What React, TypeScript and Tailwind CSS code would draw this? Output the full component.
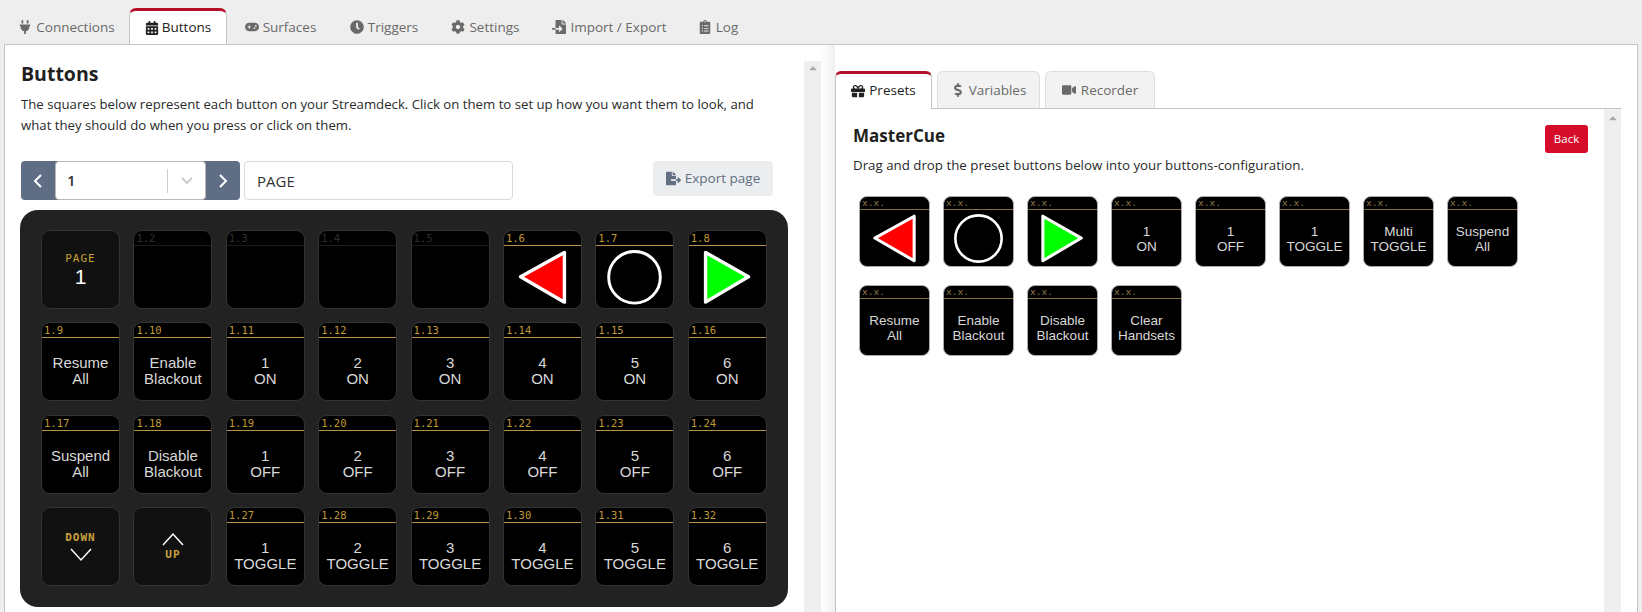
import { ReactNode } from "react";
import {
  FaPlug,
  FaCalendarAlt,
  FaClock,
  FaCog,
  FaFileImport,
  FaClipboardList,
  FaGift,
  FaDollarSign,
  FaVideo,
  FaFileExport,
  FaCaretUp,
} from "react-icons/fa";
import { FaGamepad } from "react-icons/fa6";

const mainTabs = [
  { label: "Connections", icon: <FaPlug />, width: "w-[125px]" },
  { label: "Buttons", icon: <FaCalendarAlt />, width: "w-[98px]", active: true },
  { label: "Surfaces", icon: <FaGamepad />, width: "w-[107px]" },
  { label: "Triggers", icon: <FaClock />, width: "w-[100px]" },
  { label: "Settings", icon: <FaCog />, width: "w-[103px]" },
  { label: "Import / Export", icon: <FaFileImport />, width: "w-[145px]" },
  { label: "Log", icon: <FaClipboardList />, width: "w-[72px]" },
];

const pixelFont = "font-['DejaVu_Sans_Mono',monospace]";

function Triangle({ dir }: { dir: "left" | "right" }) {
  const points = dir === "left" ? "17,47 62,22 62,73" : "17,22 17,73 61,47";
  return (
    <svg viewBox="0 0 79 79" className="absolute inset-0 h-full w-full">
      <polygon
        points={points}
        fill={dir === "left" ? "#ff0000" : "#00ff00"}
        stroke="#ffffff"
        strokeWidth="3.5"
        strokeLinejoin="round"
      />
    </svg>
  );
}

function Circle() {
  return (
    <svg viewBox="0 0 79 79" className="absolute inset-0 h-full w-full">
      <circle cx="39.5" cy="47.5" r="26.5" fill="none" stroke="#ffffff" strokeWidth="3" />
    </svg>
  );
}

function Key({ id, lines, art, dim }: { id: string; lines?: string[]; art?: ReactNode; dim?: boolean }) {
  return (
    <div className="relative h-[79px] w-[79px] overflow-hidden rounded-[9px] border border-[#333333] bg-black">
      <div
        className={`flex h-[15px] items-center border-b pl-[2px] text-[10.5px] leading-none ${pixelFont} ${
          dim ? "border-[#1c1c1c] text-[#2e2e2e]" : "border-[#b8924a] text-[#c09a35]"
        }`}
      >
        {id}
      </div>
      {art}
      {lines && (
        <div className="absolute inset-x-0 top-[32px] text-center font-['Liberation_Sans',sans-serif] text-[15px] leading-[16px] text-[#d8d8d8]">
          {lines.map((l) => (
            <div key={l}>{l}</div>
          ))}
        </div>
      )}
    </div>
  );
}

function NavKey({ children }: { children: ReactNode }) {
  return (
    <div className="flex h-[79px] w-[79px] flex-col items-center justify-center rounded-[9px] border border-[#333333] bg-[#111111]">
      {children}
    </div>
  );
}

function PresetKey({ lines, art }: { lines?: string[]; art?: ReactNode }) {
  return (
    <div className="relative h-[71px] w-[71px] overflow-hidden rounded-[8px] border border-[#aaaaaa] bg-black">
      <div className={`flex h-[13px] items-center border-b border-[#85703f] pl-[2px] text-[9.5px] leading-none text-[#8d7a45] ${pixelFont}`}>
        x.x.
      </div>
      {art}
      {lines && (
        <div className="absolute inset-x-0 top-[27px] text-center font-['Liberation_Sans',sans-serif] text-[13.5px] leading-[15px] text-[#d8d8d8]">
          {lines.map((l) => (
            <div key={l}>{l}</div>
          ))}
        </div>
      )}
    </div>
  );
}

const row2 = ["Resume|All", "Enable|Blackout", "1|ON", "2|ON", "3|ON", "4|ON", "5|ON", "6|ON"];
const row3 = ["Suspend|All", "Disable|Blackout", "1|OFF", "2|OFF", "3|OFF", "4|OFF", "5|OFF", "6|OFF"];
const row4 = ["1|TOGGLE", "2|TOGGLE", "3|TOGGLE", "4|TOGGLE", "5|TOGGLE", "6|TOGGLE"];

const presets: { lines?: string[]; art?: ReactNode }[] = [
  { art: <Triangle dir="left" /> },
  { art: <Circle /> },
  { art: <Triangle dir="right" /> },
  { lines: ["1", "ON"] },
  { lines: ["1", "OFF"] },
  { lines: ["1", "TOGGLE"] },
  { lines: ["Multi", "TOGGLE"] },
  { lines: ["Suspend", "All"] },
  { lines: ["Resume", "All"] },
  { lines: ["Enable", "Blackout"] },
  { lines: ["Disable", "Blackout"] },
  { lines: ["Clear", "Handsets"] },
];

export default function App() {
  return (
    <div className="flex h-[612px] w-[1642px] flex-col overflow-hidden bg-[#eeeeee] font-['Open_Sans',sans-serif] text-[13.5px] text-[#2a2a2a]">
      {/* main tabs */}
      <div className="flex h-[44px] shrink-0 items-end pl-[4px]">
        {mainTabs.map((t) =>
          t.active ? (
            <div
              key={t.label}
              className={`mb-[-1px] flex h-[37px] items-center justify-center gap-[3px] rounded-t-[7px] border-x border-t-[3px] border-x-[#c4c4c4] border-t-[#b5102a] bg-white pb-[1px] text-[#222222] ${t.width}`}
            >
              <span className="text-[14px]">{t.icon}</span>
              {t.label}
            </div>
          ) : (
            <div key={t.label} className={`flex h-[37px] items-center justify-center gap-[4px] pt-[3px] text-[#6a6a6a] ${t.width}`}>
              <span className="text-[14px]">{t.icon}</span>
              {t.label}
            </div>
          ),
        )}
      </div>

      <div className="ml-[4px] mr-[4px] flex min-h-0 flex-1 border border-b-0 border-[#c4c4c4] bg-white">
        {/* left column */}
        <div className="w-[799px] shrink-0 pl-[16px]">
          <h1 className="mt-[14px] text-[19.5px] font-bold leading-[30px] text-[#1f1f1f]">Buttons</h1>
          <p className="mt-[5px] w-[750px] text-[13.2px] leading-[20.5px]">
            The squares below represent each button on your Streamdeck. Click on them to set up how you want them to look, and what they
            should do when you press or click on them.
          </p>

          <div className="mt-[26px] flex h-[39px] w-[752px] items-start">
            <div className="flex h-[39px] w-[219px] rounded-[4px] bg-[#5f6e85]">
              <div className="flex w-[34px] items-center justify-center text-white">
                <svg width="12" height="16" viewBox="0 0 12 16" fill="none" stroke="currentColor" strokeWidth="2">
                  <path d="M9 2 3 8l6 6" />
                </svg>
              </div>
              <div className="flex flex-1 items-center rounded-[4px] border border-[#b8b8b8] bg-white pl-[11px] text-[15px] font-semibold text-[#333333]">
                <span className="flex-1">1</span>
                <span className="h-[24px] w-px bg-[#cccccc]" />
                <span className="flex w-[37px] justify-center text-[#cccccc]">
                  <svg width="14" height="10" viewBox="0 0 14 10" fill="none" stroke="currentColor" strokeWidth="2">
                    <path d="m2 2 5 5 5-5" />
                  </svg>
                </span>
              </div>
              <div className="flex w-[34px] items-center justify-center text-white">
                <svg width="12" height="16" viewBox="0 0 12 16" fill="none" stroke="currentColor" strokeWidth="2">
                  <path d="m3 2 6 6-6 6" />
                </svg>
              </div>
            </div>
            <div className="ml-[4px] flex h-[39px] w-[269px] items-center rounded-[4px] border border-[#d8dbe0] pl-[12px] pt-[1px] text-[15px] text-[#333333]">
              PAGE
            </div>
            <div className="ml-auto flex h-[35px] w-[120px] items-center justify-center gap-[4px] rounded-[4px] bg-[#ebedef] text-[#636f83]">
              <FaFileExport className="text-[15px]" />
              Export page
            </div>
          </div>

          {/* streamdeck panel */}
          <div className="ml-[-1px] mt-[10px] grid w-[768px] grid-cols-[repeat(8,79px)] gap-[13.4px] rounded-[18px] bg-[#222222] px-[21px] pb-[21px] pt-[20px]">
            <NavKey>
              <span className={`text-[11px] leading-[14px] tracking-[1px] text-[#c9a23c] ${pixelFont}`}>PAGE</span>
              <span className="font-['Liberation_Sans',sans-serif] text-[21px] leading-[22px] text-white">1</span>
            </NavKey>
            <Key id="1.2" dim />
            <Key id="1.3" dim />
            <Key id="1.4" dim />
            <Key id="1.5" dim />
            <Key id="1.6" art={<Triangle dir="left" />} />
            <Key id="1.7" art={<Circle />} />
            <Key id="1.8" art={<Triangle dir="right" />} />

            {row2.map((s, i) => (
              <Key key={s} id={`1.${i + 9}`} lines={s.split("|")} />
            ))}
            {row3.map((s, i) => (
              <Key key={s} id={`1.${i + 17}`} lines={s.split("|")} />
            ))}

            <NavKey>
              <span className={`text-[11px] font-semibold leading-[14px] tracking-[1px] text-[#c9a23c] ${pixelFont}`}>DOWN</span>
              <svg width="24" height="16" viewBox="0 0 24 16" fill="none" stroke="#ffffff" strokeWidth="1.5" className="mt-[2px]">
                <path d="m2 2 10 11L22 2" />
              </svg>
            </NavKey>
            <NavKey>
              <svg width="24" height="16" viewBox="0 0 24 16" fill="none" stroke="#ffffff" strokeWidth="1.5" className="mb-[1px]">
                <path d="M2 14 12 3l10 11" />
              </svg>
              <span className={`text-[11px] font-semibold leading-[14px] tracking-[1px] text-[#c9a23c] ${pixelFont}`}>UP</span>
            </NavKey>
            {row4.map((s, i) => (
              <Key key={s} id={`1.${i + 27}`} lines={s.split("|")} />
            ))}
          </div>
        </div>

        {/* outer scrollbar */}
        <div className="mt-[16px] flex w-[17px] shrink-0 justify-center bg-[#efefef] pt-[1px] text-[#aaaaaa]">
          <FaCaretUp className="text-[12px]" />
        </div>

        {/* right column */}
        <div className="flex min-w-0 flex-1 bg-gradient-to-r from-white to-[#f0f0f0] bg-[length:14px_100%] bg-no-repeat">
          <div className="ml-[14px] mr-[16px] mt-[25px] flex min-w-0 flex-1 flex-col">
            <div className="z-10 flex h-[38px] shrink-0 items-end gap-[5px]">
              <div className="mb-[-1px] flex h-[38px] w-[97px] items-center justify-center gap-[4px] rounded-t-[6px] border-x border-t-[3px] border-x-[#c4c4c4] border-t-[#b5102a] bg-white pb-[2px] text-[#222222]">
                <FaGift className="text-[14px]" />
                Presets
              </div>
              <div className="flex h-[37px] w-[103px] items-center justify-center gap-[4px] rounded-t-[6px] border-x border-t border-[#dddddd] bg-[#f2f2f2] text-[#6a6a6a]">
                <FaDollarSign className="text-[14px]" />
                Variables
              </div>
              <div className="flex h-[37px] w-[110px] items-center justify-center gap-[5px] rounded-t-[6px] border-x border-t border-[#dddddd] bg-[#f2f2f2] text-[#6a6a6a]">
                <FaVideo className="text-[14px]" />
                Recorder
              </div>
            </div>

            <div className="flex min-h-0 flex-1 border-l border-t border-[#c4c4c4] bg-white">
              <div className="min-w-0 flex-1 pl-[17px] pr-[16px]">
                <div className="flex items-start justify-between pt-[16px]">
                  <h2 className="mt-[-2px] text-[17px] font-bold leading-[26px] text-[#1f1f1f]">MasterCue</h2>
                  <div className="flex h-[28px] w-[43px] items-center justify-center rounded-[3px] bg-[#d50c2a] text-[11.5px] text-white">
                    Back
                  </div>
                </div>
                <p className="mt-[2px] text-[13.3px] leading-[20px]">Drag and drop the preset buttons below into your buttons-configuration.</p>
                <div className="ml-[6px] mt-[21px] grid grid-cols-[repeat(8,71px)] gap-x-[13px] gap-y-[18px]">
                  {presets.map((p, i) => (
                    <PresetKey key={i} lines={p.lines} art={p.art} />
                  ))}
                </div>
              </div>
              <div className="flex w-[17px] shrink-0 justify-center bg-[#efefef] pt-[3px] text-[#aaaaaa]">
                <FaCaretUp className="text-[12px]" />
              </div>
            </div>
          </div>
        </div>
      </div>
    </div>
  );
}
